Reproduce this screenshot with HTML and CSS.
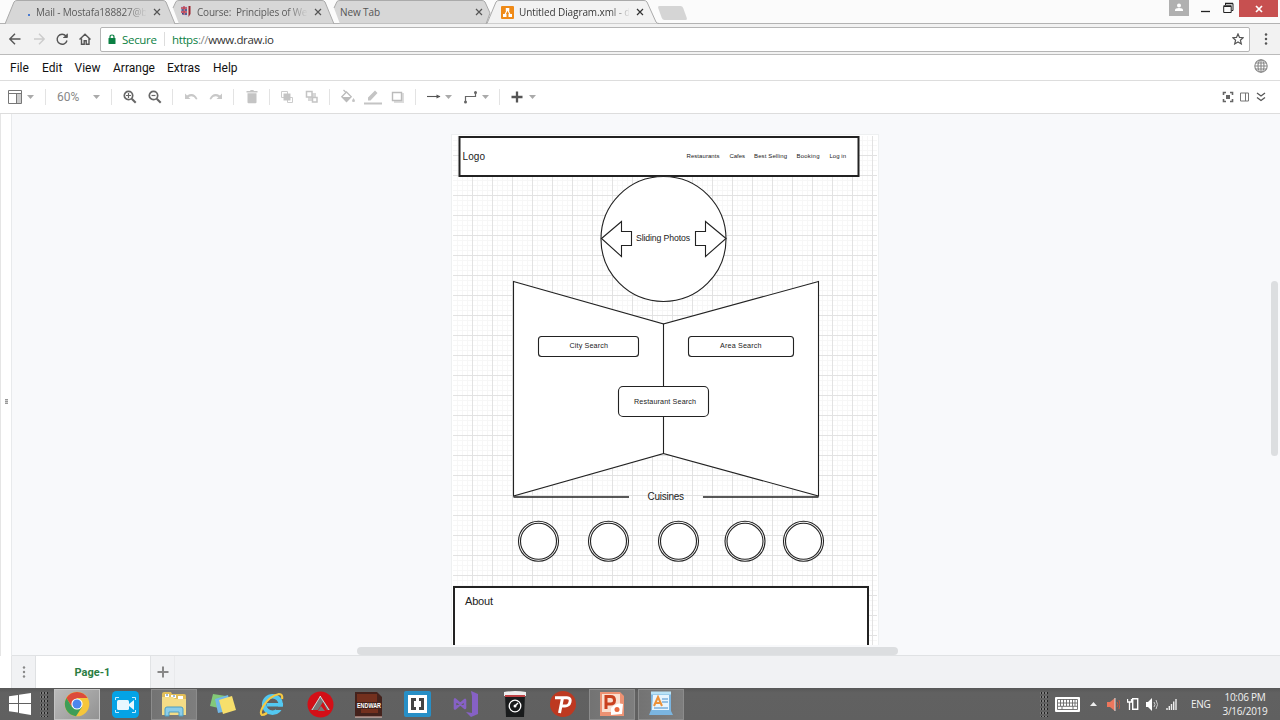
FILE: index.html
```html
<!DOCTYPE html>
<html lang="en">
<head>
<meta charset="utf-8">
<title>Untitled Diagram.xml - draw.io</title>
<link rel="stylesheet" href="styles.css">
</head>
<body>
<div class="tabstrip">
  <div class="tab tab-mail">
    <svg class="tab-shape" viewBox="0 0 172 24" preserveAspectRatio="none"><path d="M1 24 10 2Q11 .5 13 .5H159Q161 .5 162 2L171 24"/></svg>
    <span class="dot"></span><span class="tab-title t-mail">Mail - Mostafa188827@b</span><svg class="x" viewBox="0 0 8 8"><path d="M1 1l6 6M7 1l-6 6"/></svg>
  </div>
  <div class="tab tab-course">
    <svg class="tab-shape" viewBox="0 0 166 24" preserveAspectRatio="none"><path d="M4 8 7 1.5Q8 .5 10 .5H153Q155 .5 156 2L165 24H10"/></svg>
    <svg class="fav" width="12" height="14" viewBox="0 0 12 14"><path d="M1 1h6v11Q1 10 1 5z" fill="#c8cbe0"/><path d="M1 3h6M4 1v9M1 7h6" stroke="#c04050" stroke-width="1.300"/><path d="M1.500 5h2M5 5h2M2 8.700h1.500M5 9h2" stroke="#31417e" stroke-width="1.500"/><path d="M8.500 1h2v8l-2 3z" fill="#9b2731"/></svg><span class="tab-title t-course">Course:&nbsp; Principles of We</span><svg class="x" viewBox="0 0 8 8"><path d="M1 1l6 6M7 1l-6 6"/></svg>
  </div>
  <div class="tab tab-new">
    <svg class="tab-shape" viewBox="0 0 166 24" preserveAspectRatio="none"><path d="M4 8 7 1.5Q8 .5 10 .5H152Q154 .5 155 2L160 13 156 24H10"/></svg>
    <span class="tab-title t-new">New Tab</span><svg class="x" viewBox="0 0 8 8"><path d="M1 1l6 6M7 1l-6 6"/></svg>
  </div>
  <div class="tab tab-active">
    <svg class="tab-shape" viewBox="0 0 172 24" preserveAspectRatio="none"><path d="M0 23.5 9 2Q10 .5 12 .5H157Q159 .5 160 2L169 22Q170 23.5 172 23.5V24H0"/></svg>
    <svg class="fav" width="13" height="13" viewBox="0 0 13 13"><rect width="13" height="13" rx="1" fill="#ef8a17"/><path d="M6.500 3.500 3.500 9.500M6.500 3.500l3 6" stroke="#fff" stroke-width="1.200"/><path d="M4.800 2h3.500v3H4.800zM2 8h3.500v3H2zM7.500 8H11v3H7.500z" fill="#fff"/></svg><span class="tab-title t-active">Untitled Diagram.xml - d</span><svg class="x" viewBox="0 0 8 8"><path d="M1 1l6 6M7 1l-6 6"/></svg>
  </div>
  <div class="newtab"></div>
  <div class="winctl">
    <span class="user"><svg width="10" height="9" viewBox="0 0 10 9"><circle cx="5" cy="2.500" r="2" fill="#fff"/><path d="M1 8V7q0-2 4-2t4 2v1z" fill="#fff"/></svg></span>
    <svg class="mini" width="34" height="16" viewBox="0 0 34 16"><path d="M0 11.500h9" stroke="#222" stroke-width="1.300"/><path d="M22.700 6.500h7.500v6h-7.500zM24.500 5V3.500h7.500v7h-1.500" fill="none" stroke="#222"/><path d="M22.500 6h8M24 3.500h8" stroke="#222" stroke-width="1.600"/></svg>
    <span class="close"><svg width="8" height="8" viewBox="0 0 8 8"><path d="M1 1l6 6M7 1l-6 6" stroke="#fff" stroke-width="1.700"/></svg></span>
  </div>
</div>

<div class="address">
  <svg class="nav" width="92" height="30" viewBox="0 0 92 30"><g fill="none" stroke="#555" stroke-width="1.400"><path d="M20.500 15H10M15 9.700 9.800 15l5.200 5.300"/><path stroke="#ccc" d="M34 15h10M39 9.700 44.200 15 39 20.300"/><path d="M66 12A5 5 0 1 0 67 16.500"/><path d="M67.300 9.700v3.800h-4" fill="#555" stroke-width="1"/><path d="M79.500 15.500 85 10.300l5.500 5.200M81.500 14.500v5.800h2.700v-3.500h2v3.500h2.800v-5.800"/></g></svg>
  <div class="url">
    <svg width="8" height="11" viewBox="0 0 8 11"><path d="M2 5V3q0-2 2-2t2 2v2" fill="none" stroke="#0b8043" stroke-width="1.200"/><rect x=".5" y="4" width="7" height="6" rx=".6" fill="#0b8043"/></svg>
    <span class="secure">Secure</span><span class="usep"></span><span class="link"><span class="https">https</span><span class="sl">://</span>www.draw.io</span>
    <svg class="star" width="12" height="12" viewBox="0 0 12 12"><path d="M6 .9 7.500 4.400l3.700.300L8.400 7.200l.9 3.700L6 8.900l-3.300 2 .9-3.700L.8 4.700l3.700-.3z" fill="none" stroke="#555" stroke-width="1.200"/></svg>
  </div>
  <svg class="kebab" width="4" height="12" viewBox="0 0 4 12"><g fill="#555"><circle cx="2" cy="1.500" r="1.250"/><circle cx="2" cy="6" r="1.250"/><circle cx="2" cy="10.500" r="1.250"/></g></svg>
</div>

<div class="menubar">
  <span class="m-file">File</span><span class="m-edit">Edit</span><span class="m-view">View</span><span class="m-arr">Arrange</span><span class="m-ext">Extras</span><span>Help</span>
  <svg class="globe" width="14" height="14" viewBox="0 0 14 14"><g fill="none" stroke="#888" stroke-width="1.100"><circle cx="7" cy="7" r="6.200"/><ellipse cx="7" cy="7" rx="3" ry="6.200"/><path d="M7 1v12M1 7h12M1.800 4h10.400M1.800 10h10.400"/></g></svg>
</div>

<div class="toolbar">
  <div class="grp g-panel"><svg width="16" height="16" viewBox="0 0 16 16"><path d="M1.500 1.500h13v13h-13z" fill="#fff" stroke="#777"/><path d="M10 5h4v9h-4z" fill="#ccc"/><path d="M1.500 4.500h13M9.500 4.500v10" stroke="#777"/></svg><i class="caret"></i></div>
  <div class="grp g-zoom"><span class="pct">60%</span><i class="caret"></i></div>
  <div class="grp g-mag">
    <svg width="20" height="20" viewBox="0 0 20 20"><g fill="none" stroke="#666" stroke-width="1.700"><circle cx="8.500" cy="8.500" r="4.200"/><path d="M11.700 11.700l4 4" stroke-width="2"/><path d="M6 8.500h5M8.500 6v5" stroke-width="1.200"/></g></svg>
    <svg width="20" height="20" viewBox="0 0 20 20"><g fill="none" stroke="#666" stroke-width="1.700"><circle cx="8.500" cy="8.500" r="4.200"/><path d="M11.700 11.700l4 4" stroke-width="2"/><path d="M6.500 8.500h4" stroke-width="1.200"/></g></svg>
  </div>
  <div class="grp g-undo">
    <svg width="20" height="20" viewBox="0 0 20 20"><path d="M4 6.500V12h5.500L7.500 10.200Q12 7.500 15 12.500l1.500-.5Q13 4.500 6 8.500z" fill="#c8c8c8"/></svg>
    <svg width="20" height="20" viewBox="0 0 20 20"><path d="M16 6.500V12h-5.500l2-1.800Q8 7.500 5 12.500L3.500 12Q7 4.500 14 8.500z" fill="#c8c8c8"/></svg>
  </div>
  <div class="grp g-trash"><svg width="20" height="20" viewBox="0 0 20 20"><path d="M4.500 4H8l.7-.9h2.600L12 4h3.500v1.500h-11zM5.500 6.300h9v9q0 1-1 1h-7q-1 0-1-1z" fill="#c4c4c4"/></svg></div>
  <div class="grp g-order">
    <svg width="20" height="20" viewBox="0 0 20 20"><path d="M4.500 4.500h6v6h-6zM10.500 10.500h5v5h-5z" fill="#fff" stroke="#ccc"/><path d="M6.500 6.500h7v7h-7z" fill="#c4c4c4"/></svg>
    <svg width="20" height="20" viewBox="0 0 20 20"><path d="M6 6h8v8H6z" fill="#d8d8d8"/><path d="M4.500 4.500H10V10H4.500zM10.500 10.500H15V15h-4.500z" fill="#fff" stroke="#c4c4c4" stroke-width="1.500"/></svg>
  </div>
  <div class="grp g-style">
    <svg width="20" height="20" viewBox="0 0 20 20"><path d="M5.500 3l2.500 2.500" stroke="#bbb" stroke-width="1.300"/><path d="M8.500 5l4.700 4.700-4.700 4.800L3.800 9.700z" fill="#fff" stroke="#bbb" stroke-width="1.300"/><path d="M4 10h9l-4.500 4.500z" fill="#bbb"/><path d="M15.500 11q3 4 0 4t0-4" fill="#c4c4c4"/></svg>
    <svg width="20" height="20" viewBox="0 0 20 20"><path d="M5 13.500v-3l7-7L14.500 6l-7 7.500zM1 15.500h18v2H1z" fill="#c4c4c4"/></svg>
    <svg width="20" height="20" viewBox="0 0 20 20"><path d="M6 6h10v10H6z" fill="#ddd"/><path d="M4.500 5.500h9v8h-9z" fill="#fff" stroke="#bbb" stroke-width="1.400"/></svg>
  </div>
  <div class="grp g-conn">
    <svg width="16" height="20" viewBox="0 0 16 20"><path d="M1 9.500h13" stroke="#555" stroke-width="1.100"/><path d="M10.500 7.500l4 2-4 2z" fill="#555"/></svg><i class="caret"></i>
    <svg class="elbow" width="16" height="20" viewBox="0 0 16 20"><path d="M2.500 15V9.500h10V5" fill="none" stroke="#666" stroke-width="1.200"/><circle cx="2.500" cy="15" r="1.500" fill="#666"/><circle cx="12.500" cy="5.500" r="1.500" fill="#666"/></svg><i class="caret"></i>
  </div>
  <div class="grp g-add"><svg width="12" height="12" viewBox="0 0 12 12"><path d="M6 .5v11M.5 6h11" stroke="#555" stroke-width="2.300"/></svg><i class="caret"></i></div>
  <div class="right">
    <svg width="12" height="12" viewBox="0 0 12 12"><path d="M1.500 4V1.500H4M8 1.500h2.500V4M10.500 8v2.500H8M4 10.500H1.500V8" fill="none" stroke="#666" stroke-width="1.600"/><path d="M4 4h4v4H4z" fill="#666"/></svg>
    <svg width="9" height="10" viewBox="0 0 9 10"><path d="M.5 1h8v8h-8zM5.500 1v8" fill="none" stroke="#777"/></svg>
    <svg width="10" height="10" viewBox="0 0 10 10"><path d="M1 1l4 3 4-3M1 5.500l4 3 4-3" fill="none" stroke="#555" stroke-width="1.300"/></svg>
  </div>
</div>

<div class="workspace">
  <div class="splitter"><span></span></div>
  <div class="editor">
    <svg class="diagram" width="1268" height="531" viewBox="12 114 1268 531">
      <defs>
        <pattern id="grid" x="452" y="135" width="20" height="20" patternUnits="userSpaceOnUse"><path d="M5 0h1v20H5zM10 0h1v20h-1zM15 0h1v20h-1zM0 5h20v1H0zM0 10h20v1H0zM0 15h20v1H0z" fill="#f7f7f7"/><path d="M0 0h1v20H0zM0 0h20v1H0z" fill="#e2e2e2"/></pattern>
      </defs>
      <rect x="451.500" y="134.500" width="427" height="520" fill="#fff" stroke="#eef0f1"/>
      <rect x="453" y="136" width="424" height="519" fill="url(#grid)"/>
      <g fill="#fff" stroke="#222" stroke-width="1.100">
        <rect x="459.500" y="137" width="399" height="39" stroke-width="2"/>
        <circle cx="663.500" cy="239" r="62.500"/>
        <path d="M601.500 238.500l20-17v10h10v14h-10v11zM726 238.500l-20.500-17v10h-10v14h10v11z"/>
        <path d="M513.500 281.500l150 42.500v129.500l-150 42.500zM818.500 281.500L663.500 324v129.500l155 42.500z"/>
        <path d="M513.500 497h115.500M703 497h115.500" stroke-width="1.400"/>
        <rect x="538.500" y="336.500" width="100" height="20" rx="3"/>
        <rect x="688.500" y="336.500" width="105" height="20" rx="3"/>
        <rect x="618.500" y="386.500" width="90" height="30" rx="4.500"/>
        <circle cx="538.500" cy="541.300" r="20"/><circle cx="538.500" cy="541.300" r="18"/>
        <circle cx="608.500" cy="541.300" r="20"/><circle cx="608.500" cy="541.300" r="18"/>
        <circle cx="678.500" cy="541.300" r="20"/><circle cx="678.500" cy="541.300" r="18"/>
        <circle cx="745" cy="541.300" r="20"/><circle cx="745" cy="541.300" r="18"/>
        <circle cx="803.500" cy="541.300" r="20"/><circle cx="803.500" cy="541.300" r="18"/>
        <rect x="454" y="587" width="414" height="80" stroke-width="2"/>
      </g>
      <g class="labels">
        <text x="462.500" y="160" font-size="10" textLength="22.500">Logo</text>
        <g font-size="6">
          <text x="686.500" y="158" textLength="33">Restaurants</text><text x="729.500" y="158" textLength="15.500">Cafes</text><text x="754" y="158" textLength="33">Best Selling</text><text x="796.500" y="158" textLength="23">Booking</text><text x="829.500" y="158" textLength="16.500">Log in</text>
        </g>
        <text x="636" y="241" font-size="8.700" textLength="54">Sliding Photos</text>
        <g font-size="7.200"><text x="569.500" y="348.300" textLength="38.500">City Search</text><text x="720" y="348.300" textLength="41.500">Area Search</text><text x="634" y="403.800" textLength="62">Restaurant Search</text></g>
        <text x="647.500" y="500" font-size="10" textLength="36.500">Cuisines</text>
        <text x="465" y="605" font-size="11" textLength="28">About</text>
      </g>
    </svg>
    <div class="hscroll"></div>
    <div class="vscroll"></div>
  </div>
</div>

<div class="pages">
  <div class="gutter"></div>
  <div class="pmenu"><svg width="4" height="12" viewBox="0 0 4 12"><g fill="#888"><circle cx="2" cy="1.500" r="1.200"/><circle cx="2" cy="6" r="1.200"/><circle cx="2" cy="10.500" r="1.200"/></g></svg></div>
  <div class="ptab">Page-1</div>
  <div class="padd"><svg width="12" height="12" viewBox="0 0 12 12"><path d="M6 .5v11M.5 6h11" stroke="#888" stroke-width="2"/></svg></div>
</div>

<div class="taskbar">
  <svg class="start" width="22" height="24" viewBox="0 0 22 24"><path d="M0 4.200 9 3v8H0zM10 2.800 22 1v10H10zM0 12h9v8.500L0 19.200zM10 12h12v11l-12-2z" fill="#fff"/></svg>
  <span class="grip"></span>
  <div class="apps">
    <span class="app on hot"><svg width="26" height="26" viewBox="0 0 26 26"><circle cx="13" cy="13" r="12.300" fill="#f6c63b"/><path d="M2.400 7A12.300 12.300 0 0 1 23.600 7H13L8 16z" fill="#dc4b3c"/><path d="M2.400 7A12.300 12.300 0 0 0 12 25.300L18 16 8 16z" fill="#3e9d58"/><circle cx="13" cy="13" r="5.600" fill="#fff"/><circle cx="13" cy="13" r="4.500" fill="#4d86ee"/></svg></span>
    <span class="app"><svg width="27" height="27" viewBox="0 0 27 27"><rect width="27" height="27" rx="4.500" fill="#04a3e6"/><rect x="5" y="9" width="12" height="10" rx="1.500" fill="#e7f7ff"/><path d="M17 13l5-4v10l-5-4z" fill="#e7f7ff"/><path d="M3.500 9V6.500H7M20 6.500h3.500V9M3.500 19v2.500H7M20 21.500h3.500V19" fill="none" stroke="#c7edff"/></svg></span>
    <span class="app on"><svg width="26" height="26" viewBox="0 0 26 26"><path d="M1 3q0-2 2-2h7l1 2h12q2 0 2 2v19H1z" fill="#e1bd58"/><path d="M4 3h4v3H4zM10 4h5v3h-5zM17 5h5v3h-5z" fill="#fff"/><path d="M5 4h2M12 5h2" stroke="#3976af"/><path d="M1 6h11l2 2h11v16H1z" fill="#f4dc86"/><path d="M4 25v-7q0-2 2-2h14q2 0 2 2v7h-4v-4H8v4z" fill="#8bcde9" stroke="#4b9dc3"/></svg></span>
    <span class="app"><svg width="26" height="24" viewBox="0 0 26 24"><path d="M3 2l13 2-3 13L0 14z" fill="#83c978"/><path d="M5 7l13-4 4 15-14 3z" fill="#72b8e7"/><path d="M9 8l13-4 4 14-13 4z" fill="#f7df6c"/></svg></span>
    <span class="app"><svg width="26" height="26" viewBox="0 0 26 26"><circle cx="13.500" cy="13.500" r="8.300" fill="none" stroke="#53c8f1" stroke-width="4.600"/><path d="M17 15.500h8v3.500h-8z" fill="#606060"/><path d="M8 12h16v3.500H8z" fill="#53c8f1"/><path d="M23 8q1-5-3-5-9 2-15 11-5 8-2 10 2 0 5-2" fill="none" stroke="#f6c942" stroke-width="2.200"/></svg></span>
    <span class="app"><svg width="27" height="27" viewBox="0 0 27 27"><circle cx="13.500" cy="13.500" r="13" fill="#d30f17"/><path d="M13.500 5 4 19h7l5-8 4 8h3zM14 15l-3 5h7z" fill="#777"/><path d="M13.500 5 5 19M13 5l9 14" stroke="#fff" stroke-width=".7"/></svg></span>
    <span class="app"><svg width="27" height="27" viewBox="0 0 27 27"><path d="M0 1h22l5 5v20H0z" fill="#44221c"/><path d="M2 3h20v8H2zM6 18h17v4H6z" fill="#87361f" opacity=".7"/><path d="M0 26h27" stroke="#edc8bf"/><text class="game" x="2" y="17" textLength="24" lengthAdjust="spacingAndGlyphs">ENDWAR</text></svg></span>
    <span class="app"><svg width="27" height="26" viewBox="0 0 27 26"><rect width="27" height="26" rx="2" fill="#278fc6"/><path d="M4 4h19v18H4z" fill="#fff"/><path d="M12 7H7v12h5v-3h-2v-6h2zM15 7h5v12h-5v-3h2v-6h-2z" fill="#444"/></svg></span>
    <span class="app"><svg width="26" height="26" viewBox="0 0 26 26"><path d="M18 0l7 3v20l-7 3-5-5 6 1V5z" fill="#8661c5"/><path d="M2 8.500v9l10-8.500v8z" fill="none" stroke="#8661c5" stroke-width="2.600" stroke-linejoin="round"/></svg></span>
    <span class="app"><svg width="22" height="26" viewBox="0 0 22 26"><path d="M1 4h20l-1 22H2z" fill="#191b1c"/><path d="M0 1q11-2 22 0v4H0z" fill="#eee"/><path d="M1 5h20" stroke="#be4144" stroke-width="2"/><circle cx="11" cy="15" r="5.800" fill="none" stroke="#fff" stroke-width="1.300"/><path d="M11 15l3-3" stroke="#fff" stroke-width="1.500"/><circle cx="11" cy="15" r="1.500" fill="#fff"/></svg></span>
    <span class="app"><svg width="26" height="26" viewBox="0 0 26 26"><circle cx="13" cy="13" r="13" fill="#bd3921"/><path d="M5 6.700h12q4 0 3 4.300-1 4-5 4h-3.500M12.500 7l-3 15" fill="none" stroke="#fff" stroke-width="3"/></svg></span>
    <span class="app on"><svg width="26" height="26" viewBox="0 0 26 26"><path d="M1 1h20l4 4v20H1z" fill="#ed9273"/><path d="M3 3h18v18H3z" fill="#f9dfd0"/><path d="M7 18V5.500h4.500q4 0 4 3.800t-4 3.700H7" fill="none" stroke="#c9411f" stroke-width="3"/><path d="M12 17q6-6 12-4l-1 10-11 1z" fill="#fff"/><circle cx="18" cy="18.500" r="2.500" fill="#e9683e"/></svg></span>
    <span class="app on"><svg width="24" height="26" viewBox="0 0 24 26"><path d="M2 2h20v18l2 4H0l2-5z" fill="#7bb5e0"/><path d="M4 4h16v15H3z" fill="#e7f4fd"/><path d="M2 2h20" stroke="#b9e2f6" stroke-width="3"/><path d="M13 8h6M13 11h6M5 17h14" stroke="#438ccb"/><path d="M5 15 9 6l4 9M6 12h5" fill="none" stroke="#ec9138" stroke-width="2"/></svg></span>
  </div>
  <div class="tray">
    <span class="grip"></span>
    <svg class="kbd" width="25" height="15" viewBox="0 0 25 15"><rect width="25" height="15" rx="1" fill="#fff"/><path d="M2.500 2.500h20v10h-20zM2.500 6h20M2.500 9.300h20M5.500 2v7M8.500 2v7M11.500 2v7M14.500 2v7M17.500 2v7M20 2v7M7 9v4M18 9v4" fill="none" stroke="#666" stroke-width=".9"/></svg>
    <i class="up"></i>
    <svg class="spk1" width="13" height="13" viewBox="0 0 13 13"><path d="M0 4h3l5-4v13L3 9H0z" fill="#ed765c"/><path d="M8 0v13" stroke="#ddd"/><path d="M10 4q2 3 0 5M12 2q2 4 0 9" stroke="#c4583f" fill="none"/></svg>
    <svg class="phone" width="12" height="14" viewBox="0 0 12 14"><path d="M5.700 1.700h5v10.600h-5z" fill="none" stroke="#fff" stroke-width="1.400"/><path d="M.5 2v3h4V2M2.500 5v8" stroke="#fff" stroke-width="1.300" fill="none"/></svg>
    <svg class="spk2" width="13" height="13" viewBox="0 0 13 13"><path d="M0 4h2l4-4v13L2 9H0z" fill="#fff"/><path d="M8 4q2 2.500 0 5M10 2q3 4.500 0 9" stroke="#ccc" fill="none"/></svg>
    <svg class="sig" width="11" height="12" viewBox="0 0 11 12"><path d="M1 12v-2M3.300 12V8M5.500 12V6M7.700 12V3.500M10 12V1" stroke="#eee" stroke-width="1.400"/></svg>
    <span class="lang">ENG</span>
    <div class="clock"><span>10:06 PM</span><span>3/16/2019</span></div>
  </div>
</div>
</body>
</html>
```
FILE: styles.css
```css
* { box-sizing: border-box; }
body { margin: 0; width: 1280px; height: 720px; overflow: hidden; display: flex; flex-direction: column; font-family: Roboto, sans-serif; background: #fff; }
svg { display: block; flex: none; }
span { white-space: nowrap; }

.tabstrip { height: 24px; flex: none; display: flex; align-items: flex-start; background: #fbfbfb; border-bottom: 1px solid #b3b3b3; font: 10px/24px "Open Sans", sans-serif; color: #555; }
.tab { position: relative; height: 24px; display: flex; align-items: center; }
.tab-shape { position: absolute; inset: 0; width: 100%; height: 24px; fill: #d7d7d7; stroke: #aaa; stroke-width: 1; }
.tab > span, .tab > .x, .tab > .fav { position: relative; }
.tab-mail { width: 172px; margin-left: 4px; padding-left: 24px; }
.tab-course { width: 166px; margin-left: -7px; padding-left: 11px; }
.tab-new { width: 166px; margin-left: -5px; padding-left: 10px; }
.tab-active { width: 172px; margin-left: -9px; padding-left: 14px; color: #333; z-index: 1; }
.tab-active .tab-shape { fill: #f2f2f2; }
.tab-title { flex: none; height: 24px; letter-spacing: -.1px; }
.t-mail { width: 110px; margin-left: 6px; letter-spacing: -.18px; }
.t-course { width: 110px; margin-left: 5px; letter-spacing: -.2px; }
.t-new { width: 128px; }
.t-active { width: 110px; margin-left: 5px; letter-spacing: -.1px; }
.t-mail, .t-course, .t-active { color: transparent; background: linear-gradient(90deg, #555 82%, #d0d0d0); -webkit-background-clip: text; background-clip: text; }
.t-active { background-image: linear-gradient(90deg, #333 82%, #ddd); }
.x { width: 8px; height: 8px; stroke: #555; stroke-width: 1.2; margin-left: 7px; }
.tab-active .x { stroke: #333; }
.dot { width: 2px; height: 2px; background: #4a7bd0; margin-top: 5px; }
.newtab { width: 25px; height: 14px; margin: 6px 0 0 1px; background: #d5d5d5; transform: skewX(20deg); border-radius: 2px; }
.winctl { margin-left: auto; display: flex; padding-right: 2px; }
.user { width: 20px; height: 16px; background: #b0b0b0; display: flex; justify-content: center; padding-top: 3px; }
.mini { margin: 0 4px 0 12px; }
.close { width: 39px; height: 17px; background: #c75050; display: flex; align-items: center; justify-content: center; }

.address { height: 31px; flex: none; display: flex; align-items: center; background: #f2f2f2; border-bottom: 1px solid #bbb; }
.nav { margin-right: 8px; }
.url { width: 1150px; height: 25px; border: 1px solid #b5b5b5; border-radius: 2px; background: #fff; display: flex; align-items: center; padding: 0 5px 0 7px; font: 11.5px/23px "Open Sans", sans-serif; color: #333; }
.secure { color: #0b8043; margin-left: 6px; width: 42px; letter-spacing: -.3px; }
.usep { width: 1px; height: 14px; background: #ddd; margin-right: 7px; }
.link { letter-spacing: -.38px; }
.https { color: #0b8043; }
.sl { color: #888; }
.star { margin-left: auto; }
.kebab { margin-left: 14px; }

.menubar { height: 26px; flex: none; display: flex; align-items: center; padding-left: 10px; border-bottom: 1px solid #ddd; font-size: 12px; color: #111; }
.m-file { width: 32px; } .m-edit { width: 32.5px; } .m-view { width: 38.5px; } .m-arr { width: 54px; } .m-ext { width: 46px; }
.globe { margin: -3px 12px 0 auto; }

.toolbar { height: 33px; flex: none; display: flex; align-items: center; border-bottom: 1px solid #ddd; }
.grp { height: 16px; display: flex; align-items: center; justify-content: center; gap: 5px; border-right: 1px solid #e3e3e3; }
.caret { flex: none; width: 7px; height: 4px; background: #aaa; clip-path: polygon(0 0, 100% 0, 50% 100%); }
.g-panel { width: 46px; justify-content: flex-start; padding-left: 7px; gap: 4px; }
.g-zoom { width: 66px; justify-content: flex-start; padding-left: 11px; gap: 13px; }
.pct { width: 23px; font-size: 12px; color: #888; }
.g-mag { width: 61px; padding-left: 1px; }
.g-undo { width: 61px; }
.g-trash { width: 36px; padding-left: 1px; }
.g-order { width: 60px; }
.g-style { width: 86px; }
.g-conn { width: 84px; gap: 2px; }
.elbow { margin-left: 9px; }
.g-conn .caret { margin-left: 1px; }
.g-add { border: 0; gap: 6px; padding-left: 11px; }
.right { margin-left: auto; display: flex; align-items: center; gap: 6px; padding-right: 14px; }
.right svg:last-child { margin-left: 1px; }

.workspace { height: 542px; flex: none; display: flex; }
.splitter { width: 12px; background: #fff; border-left: 1px solid #e5e5e5; border-right: 1px solid #e8eaec; display: flex; justify-content: center; align-items: center; }
.splitter span { width: 3px; height: 5px; margin-top: 32px; background: repeating-linear-gradient(#999 0 1px, #ccc 1px 2px); }
.editor { position: relative; width: 1268px; background: #f8f9fb; border-bottom: 1px solid #e0e2e4; }
.labels { font-family: "Liberation Sans", sans-serif; fill: #222; }
.hscroll { position: absolute; left: 345px; top: 533px; width: 541px; height: 8px; border-radius: 4px; background: #dcdee0; }
.vscroll { position: absolute; right: 2px; top: 167px; width: 7px; height: 175px; border-radius: 4px; background: #dcdee0; }

.pages { height: 32px; flex: none; display: flex; background: #f1f2f4; }
.gutter { width: 12px; background: #fff; border-right: 1px solid #e3e4e6; }
.pmenu { width: 24px; display: flex; align-items: center; justify-content: center; border-right: 1px solid #dfe1e3; }
.ptab { width: 114px; background: #fff; color: #2b7d43; font-size: 11px; font-weight: 700; line-height: 34px; text-align: center; padding-right: 1px; }
.padd { width: 25px; display: flex; align-items: center; justify-content: center; border-right: 1px solid #e9eaec; border-left: 1px solid #e1e3e5; }

.taskbar { height: 32px; flex: none; display: flex; align-items: center; background: linear-gradient(#585858, #616161 15%, #606060); }
.start { margin-left: 9px; }
.grip { width: 8px; height: 26px; flex: none; background: radial-gradient(circle, #222 0 .8px, #898989 1px, transparent 1.4px) 0 0 / 3px 4px; }
.start + .grip { margin-left: 9px; }
.apps { display: flex; gap: 2.65px; margin-left: 6px; }
.app { width: 46px; height: 31px; flex: none; display: flex; align-items: center; justify-content: center; }
.on { background: linear-gradient(90deg, #737373, #7e7e7e); border: 1px solid #8c8c8c; }
.hot { background: linear-gradient(135deg, #bbb, #929292); border-color: #c4c4c4; }
.game { font: 700 7px "Liberation Sans", sans-serif; fill: #fff; }
.tray { margin-left: auto; display: flex; align-items: center; width: 240px; color: #f2f2f2; font: 10px "Open Sans", sans-serif; }
.kbd { margin-left: 7px; }
.up { width: 7px; height: 4px; margin: 0 10px 0 10px; background: #eee; clip-path: polygon(50% 0, 100% 100%, 0 100%); flex: none; }
.phone { margin-left: 7px; }
.spk2 { margin-left: 7px; }
.sig { margin-left: 7px; }
.lang { margin-left: 14px; width: 20px; letter-spacing: -.3px; }
.clock { display: flex; flex-direction: column; align-items: center; width: 46px; margin-left: 11px; line-height: 14.5px; letter-spacing: -.25px; }
```
